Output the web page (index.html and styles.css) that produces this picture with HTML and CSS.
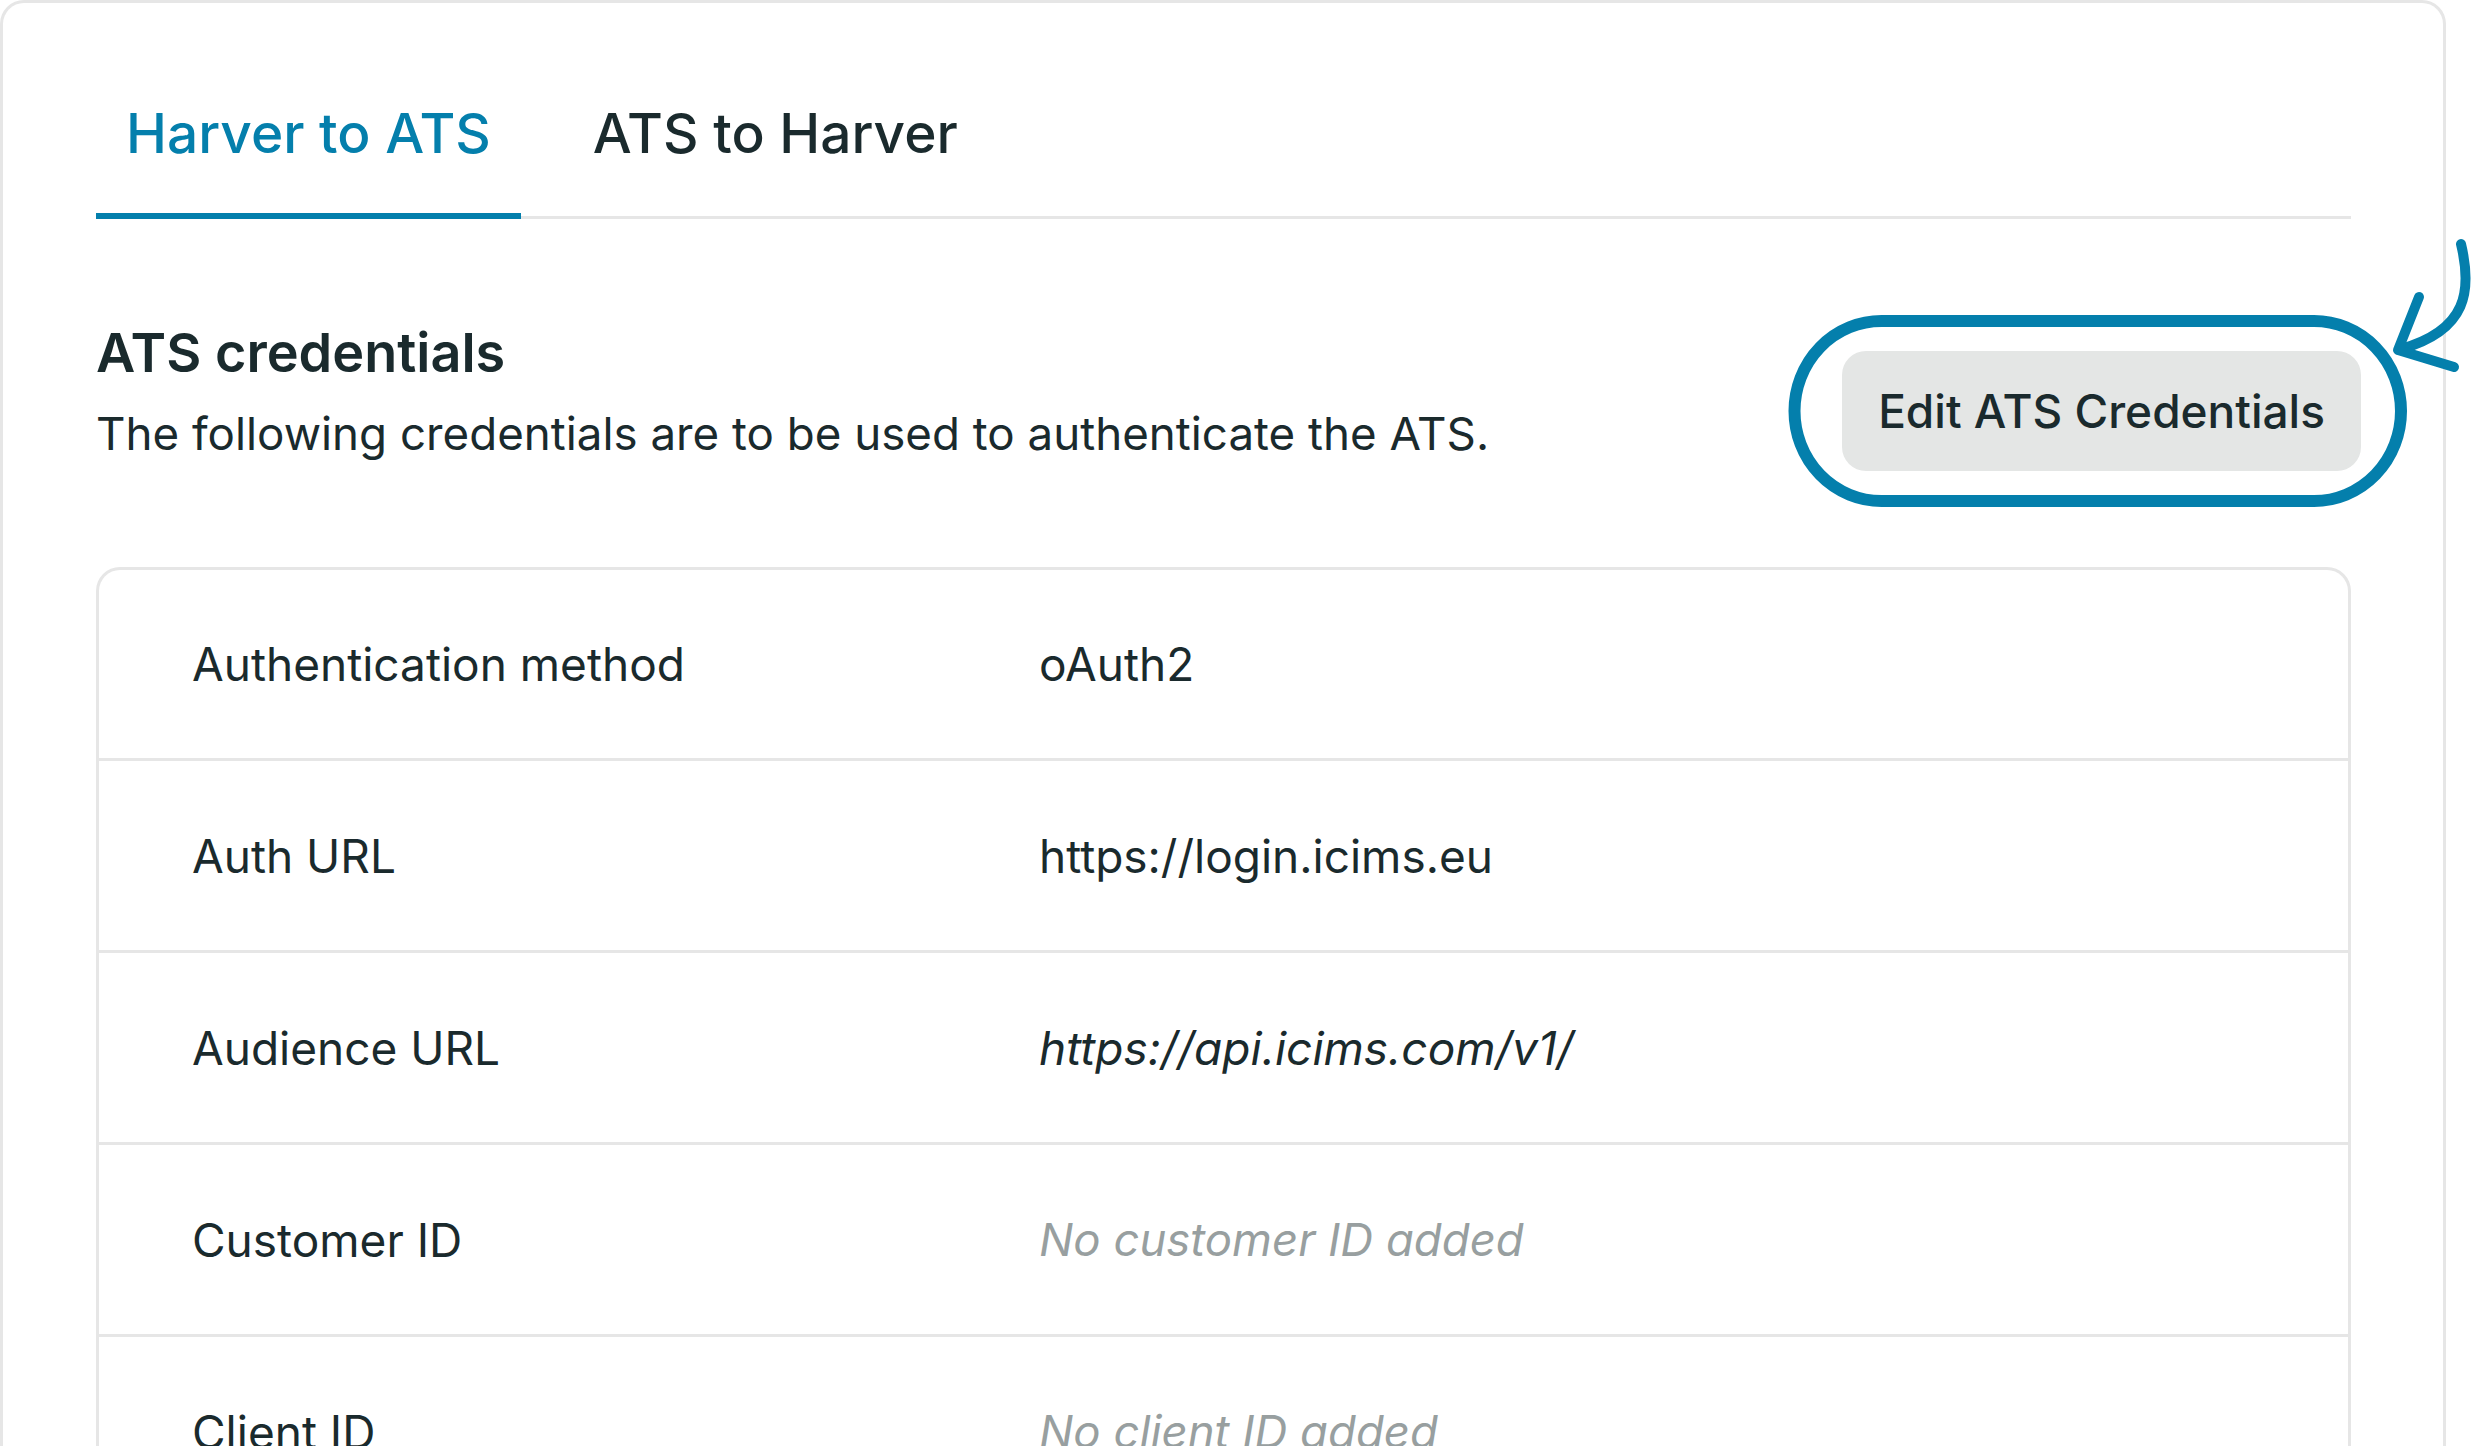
FILE: index.html
```html
<!DOCTYPE html>
<html lang="en">
  <head>
    <meta charset="UTF-8" />
    <meta name="viewport" content="width=device-width, initial-scale=1.0" />
    <title>ATS Integration</title>
    <link rel="stylesheet" href="styles.css">
  </head>
  <body>
    <div class="card">
      <nav class="tabs">
        <a class="tab active">Harver to ATS</a>
        <a class="tab">ATS to Harver</a>
      </nav>

      <section class="intro">
        <div>
          <h2>ATS credentials</h2>
          <p>The following credentials are to be used to authenticate the ATS.</p>
        </div>
        <button type="button" class="edit-btn">Edit ATS Credentials</button>
      </section>

      <div class="cred-table">
        <div class="cred-row">
          <span class="cred-label">Authentication method</span>
          <span class="cred-value">oAuth2</span>
        </div>
        <div class="cred-row">
          <span class="cred-label">Auth URL</span>
          <span class="cred-value">https://login.icims.eu</span>
        </div>
        <div class="cred-row">
          <span class="cred-label">Audience URL</span>
          <span class="cred-value italic">https://api.icims.com/v1/</span>
        </div>
        <div class="cred-row">
          <span class="cred-label">Customer ID</span>
          <span class="cred-value empty">No customer ID added</span>
        </div>
        <div class="cred-row">
          <span class="cred-label">Client ID</span>
          <span class="cred-value empty">No client ID added</span>
        </div>
      </div>

      <!-- hand drawn highlight around the edit button -->
      <svg class="annotation" viewBox="0 0 694 290" width="694" height="290">
        <rect x="14.5" y="91" width="606.5" height="180" rx="87" ry="90"
          fill="none" stroke="#047fac" stroke-width="12" />
        <path d="M681 14 C692 60, 688 100, 621 119"
          fill="none" stroke="#047fac" stroke-width="10" stroke-linecap="round" />
        <path d="M639 67 L618 120 L674 137"
          fill="none" stroke="#047fac" stroke-width="10" stroke-linecap="round" stroke-linejoin="round" />
      </svg>
    </div>
  </body>
</html>
```

FILE: styles.css
```css
body {
  margin: 0;
  font-family: Inter, "Noto Sans", sans-serif;
  color: #1a2a2d;
  background-color: #fff;
  overflow: hidden;
}

.card {
  position: relative;
  box-sizing: border-box;
  width: 2446px;
  min-height: 1446px;
  padding: 90px 92px 0 93px;
  border: 3px solid #e6e6e6;
  border-bottom: none;
  border-radius: 24px 24px 0 0;
}

.tabs {
  display: flex;
  border-bottom: 3px solid #e6e6e6;
}

.tab {
  padding: 0 30px 39px;
  margin-right: 42px;
  margin-bottom: -3px;
  font-size: 55px;
  font-weight: 500;
  line-height: 81px;
  border-bottom: 6px solid transparent;
  cursor: pointer;
}

.tab.active {
  color: #047fac;
  border-bottom-color: #047fac;
}

.intro {
  display: flex;
  justify-content: space-between;
  align-items: flex-start;
  margin-top: 93px;
}

.intro h2 {
  margin: 0;
  font-size: 54px;
  font-weight: 600;
  line-height: 81px;
}

.intro p {
  margin: 5px 0 0;
  font-size: 45.7px;
  line-height: 72px;
}

.edit-btn {
  height: 120px;
  margin-top: 39px;
  margin-right: -10px;
  padding: 0 36px;
  border: none;
  border-radius: 24px;
  background-color: #e4e6e5;
  color: #1a2a2d;
  font-family: Inter, "Noto Sans", sans-serif;
  font-size: 46px;
  font-weight: 500;
  cursor: pointer;
}

.cred-table {
  margin-top: 96px;
  border: 3px solid #e6e6e6;
  border-bottom: none;
  border-radius: 24px 24px 0 0;
}

.cred-row {
  display: grid;
  grid-template-columns: 847px 1fr;
  align-items: center;
  height: 189px;
  padding-left: 93px;
  border-bottom: 3px solid #e6e6e6;
  font-size: 46px;
}

.cred-row:first-child {
  height: 188px;
}

.cred-value.italic {
  font-style: italic;
}

.cred-value.empty {
  font-size: 45.5px;
  font-style: italic;
  color: #989fa0;
}

.annotation {
  position: absolute;
  left: 1777px;
  top: 227px;
}
```
